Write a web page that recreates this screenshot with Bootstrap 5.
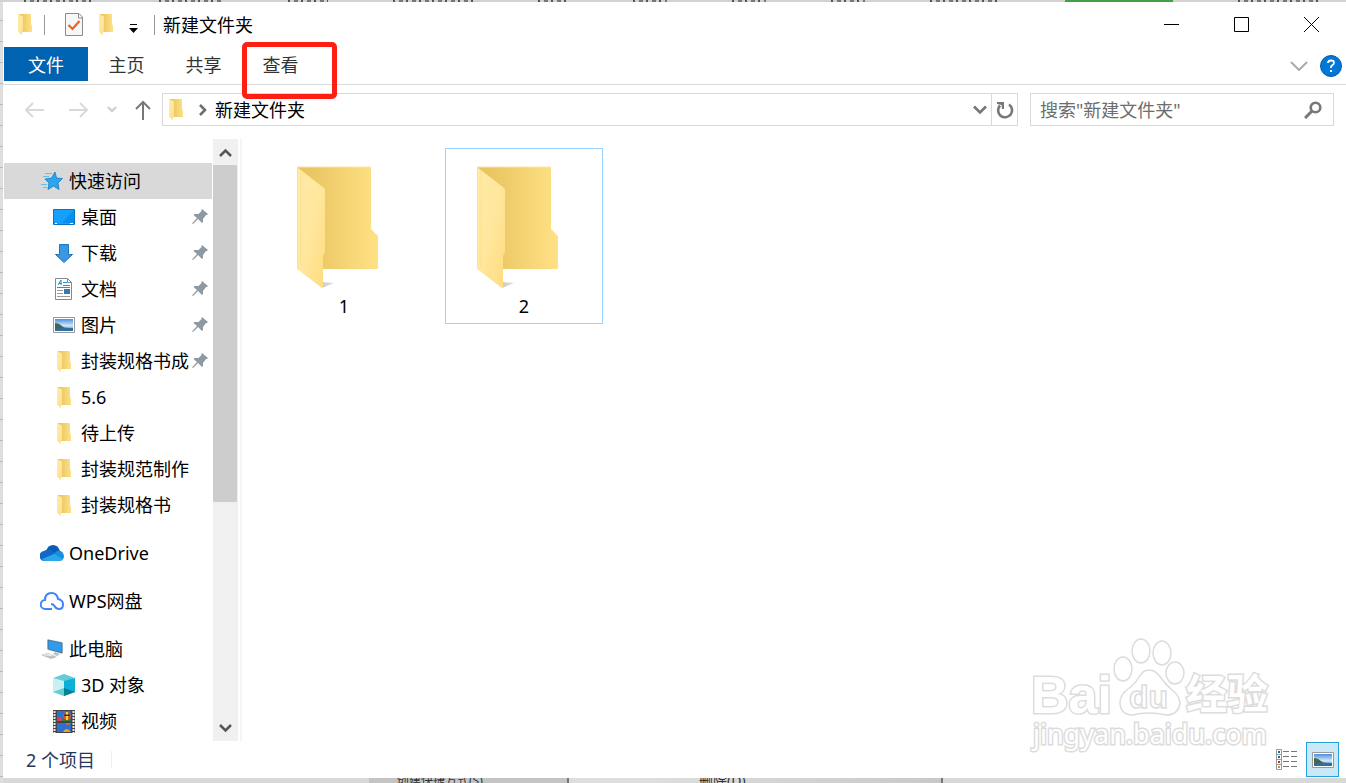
<!DOCTYPE html>
<html lang="zh-CN">
<head>
<meta charset="utf-8">
<meta name="viewport" content="width=device-width, initial-scale=1">
<title>新建文件夹</title>
<link href="https://cdn.jsdelivr.net/npm/bootstrap@5.3.0/dist/css/bootstrap.min.css" rel="stylesheet">
<style>
body{font-family:"Noto Sans","Noto Sans CJK SC",sans-serif;font-size:18px;line-height:24px;color:#000;
  background:repeating-linear-gradient(#dedede 0 20px,#b8b8b8 20px 21px)}
svg{display:block;flex:none}
button{border:0;background:none;padding:0;display:flex;align-items:center;justify-content:center}
a{color:inherit;text-decoration:none}
.desk{padding:2px 0 0 3px}
.behind-top{top:0;height:2px;background:#d2d2d2}
.behind-top span{height:2px;background:repeating-linear-gradient(90deg,#555 0 2px,#d2d2d2 2px 6px,#777 6px 10px,#d2d2d2 10px 13px)}
.behind-top .green{width:108px;background:#43a047}
.behind-bottom{height:5px;background:#d8d8d8;font-size:12px;line-height:12px;color:#333}
.behind-bottom .menu-a{width:200px;margin-left:366px;padding-left:28px;background:#c4c4c4;border-right:2px solid #777}
.behind-bottom .menu-b{width:374px;padding-left:130px;background:linear-gradient(90deg,#dedede 0 80px,#c8c8c8);border-right:2px solid #777;font-size:14px}
.behind-bottom span{line-height:6px}
.titlebar{height:45px;padding-left:15px}
.titlebar .gap-a{margin-left:12px;margin-right:16px}
.rule{width:1px;height:20px;background:#999}
.winbtn{width:70px;height:45px}
.ribbon{height:38px;border-bottom:1px solid #dadbdc;padding-left:1px}
.tab-item{min-width:77px;height:34px;line-height:36px;text-align:center;color:#333}
.tab-file{min-width:84px;background:#0063b1;color:#fff}
.marker{left:0;top:-5px;width:95px;height:57px;border:5px solid #ff1e12;border-radius:5px;z-index:5}
.addressrow{height:54px;padding:8px 12px 0 8px}
.nav-lg{width:45px;height:33px}.nav-sm{width:22px;height:33px}.nav-up{width:39px;height:33px}
.box{height:33px;border:1px solid #d9d9d9;background:#fff}
.crumbs{padding-left:6px}
.refresh{width:26px;height:31px;border-left:1px solid #d9d9d9}
.searchbox{flex:0 0 304px;margin-left:12px;padding:0 11px 0 9px}
.searchbox input{border:0;outline:0;padding:0;min-width:0;color:#6d6d6d;line-height:24px}
.searchbox input::placeholder{color:#6d6d6d;opacity:1}
.sidebar{width:209px;padding:24px 0 0 1px;flex:none}
.sidebar a{display:flex;align-items:center;height:36px;white-space:nowrap}
.sidebar .root{padding-left:36px}
.sidebar .sub{padding-left:48px}
.sidebar .ico{display:flex;justify-content:center;flex:none;width:24px;margin-right:5px}
.sidebar .cap{flex:1;overflow:hidden}
.sidebar .pin{width:16px;margin:0 4px 0 3px}
.sidebar .picked{background:#d9d9d9;width:208px}
.sidebar .spaced{margin-top:12px}
.sbar{width:25px;margin-left:1px;background:#f0f0f0;flex:none}
.sbar button{width:25px;height:26px}
.thumb{height:56%;width:24px;background:#cdcdcd}
.split{width:2px;margin:0 3px 0 2px;background:#f5f5f5;flex:none}
.files{padding:9px 20px;gap:22px}
.tile{width:158px;height:176px;border:1px solid transparent;padding-top:11px;text-align:center}
.tile:focus,.tile.focused{border-color:#99d1ff}
.tile .nm{line-height:36px}
.statusbar{height:37px;padding:0 7px 0 23px;color:#1e395b}
.statusbar .rule{background:#eee;height:17px}
.view-on{width:33px;height:35px;border:1px solid #26a0da;background:#cbe8f6}
.wmark{right:68px;bottom:21px;pointer-events:none}
</style>
</head>
<body>
<svg width="0" height="0" class="position-absolute" aria-hidden="true">
  <defs>
    <linearGradient id="gb" x1="0" x2="1"><stop offset="0" stop-color="#e8c25c"/><stop offset=".3" stop-color="#edca68"/><stop offset="1" stop-color="#ffe184"/></linearGradient>
    <linearGradient id="gf" x1="0" y1="0" x2="1" y2="1"><stop offset="0" stop-color="#ffeaa5"/><stop offset=".5" stop-color="#ffe79e"/><stop offset="1" stop-color="#ffdb7d"/></linearGradient>
    <linearGradient id="gs" x1="0" x2="1"><stop offset="0" stop-color="#ccc"/><stop offset="1" stop-color="#fff" stop-opacity="0"/></linearGradient>
    <linearGradient id="gsky" x1="0" y1="0" x2="0" y2="1"><stop offset="0" stop-color="#4b8ee0"/><stop offset=".55" stop-color="#d2e7f7"/><stop offset="1" stop-color="#4888b8"/></linearGradient>
    <symbol id="folder" viewBox="0 0 128 128">
      <path d="M98 104l12 1-12 4zM42 122l12 1-12 5z" fill="url(#gs)"/>
      <path d="M17 7H90q1 0 1 1V69l7 7v32q0 1-1 1H42L17 90z" fill="url(#gb)"/>
      <path d="M17 7l27 21q1 1 1 2v62l-2 4v32h-1L17 109z" fill="url(#gf)"/>
      <path d="M17.500 8v101M21 12v96" stroke="#ffe08c" fill="none"/>
      <path d="M17 7H91" stroke="#f9e6ac"/>
    </symbol>
    <symbol id="sfolder" viewBox="0 0 14 21"><path d="M1 0h11q1 0 1 1v9l1 2v6H4z" fill="url(#gb)"/><path d="M0 0l4 2q1 0 1 1v14l-1 1v3L0 18z" fill="url(#gf)"/></symbol>
    <symbol id="pin" viewBox="0 0 16 16"><path d="M10 0l6 5-1 1h-1l-3 4v3l-1 1-4-4-5 5-1-.5L5 9 1.500 6l1-1h4l3-3V.8z" fill="#8e9aa3"/></symbol>
    <symbol id="photo" viewBox="0 0 22 16"><path d="M.5.5h21v15H.5z" fill="#fff" stroke="#999"/><path d="M2 2h18v12H2z" fill="url(#gsky)"/><path d="M2 6q4 0 7 3t11 2v1H2z" fill="#3c6950"/><path d="M2 12q8-2 18-1v3H2z" fill="#346c9f"/></symbol>
  </defs>
</svg>

<div class="behind-top position-absolute w-100 d-flex justify-content-between px-4" aria-hidden="true">
  <span style="width:70px"></span><span style="width:64px"></span><span style="width:40px"></span><span style="width:80px"></span><span style="width:30px"></span><span style="width:34px"></span><span style="width:34px"></span><span style="width:34px"></span><span style="width:70px"></span><span class="green"></span><span style="width:84px"></span>
</div>

<div class="desk vh-100 d-flex flex-column overflow-hidden">
<main class="bg-white flex-grow-1 d-flex flex-column position-relative" style="min-height:0">
  <header class="titlebar d-flex align-items-center">
    <svg width="14" height="21"><use href="#sfolder"/></svg>
    <i class="rule gap-a"></i>
    <button class="ms-1" aria-label="属性"><svg width="18" height="23" viewBox="0 0 18 23"><path d="M.5.500H14L17.500 4v18.500H.5z" fill="#f5f7f9" stroke="#8c8c8c"/><path d="M13.500 1v4h4" fill="none" stroke="#8c8c8c"/><path d="M3.500 12l4 4 7-8" stroke="#f1611d" stroke-width="2.200" fill="none"/></svg></button>
    <button class="ms-3" aria-label="新建文件夹"><svg width="14" height="21"><use href="#sfolder"/></svg></button>
    <button class="ms-3" aria-label="自定义快速访问工具栏"><svg width="9" height="16" viewBox="0 0 9 16"><path d="M1 7.500h7" stroke="#000"/><path d="M0 11h9l-4.500 5z"/></svg></button>
    <i class="rule ms-3 me-2"></i>
    <span>新建文件夹</span>
    <div class="ms-auto d-flex">
      <button class="winbtn" aria-label="最小化"><svg width="15" height="15"><path d="M0 7.500h15" stroke="#000"/></svg></button>
      <button class="winbtn" aria-label="最大化"><svg width="15" height="15"><path d="M.5.500h14v14H.5z" fill="none" stroke="#000"/></svg></button>
      <button class="winbtn" aria-label="关闭"><svg width="15" height="15"><path d="M0 0l15 15M15 0L0 15" stroke="#000"/></svg></button>
    </div>
  </header>

  <nav class="ribbon d-flex">
    <a href="#" class="tab-item tab-file">文件</a>
    <a href="#" class="tab-item">主页</a>
    <a href="#" class="tab-item">共享</a>
    <a href="#" class="tab-item position-relative">查看<span class="marker position-absolute"></span></a>
    <div class="ms-auto d-flex align-items-center pe-1">
      <button class="me-2 pe-1" aria-label="展开功能区"><svg width="18" height="10" viewBox="0 0 18 10"><path d="M1 1l8 8 8-8" fill="none" stroke="#aaa" stroke-width="2"/></svg></button>
      <button aria-label="帮助"><svg width="22" height="22" viewBox="0 0 22 22"><circle cx="11" cy="11" r="10.500" fill="#0078d7" stroke="#0a5ba5"/><path d="M8 8q0-2.500 3-2.500t3 2.300q0 1.500-1.700 2.500T11 13" fill="none" stroke="#fff" stroke-width="1.800"/><path d="M10 15h2v2h-2z" fill="#fff"/></svg></button>
    </div>
  </nav>

  <div class="addressrow d-flex">
    <button class="nav-lg" aria-label="返回"><svg width="20" height="16" viewBox="0 0 20 16"><path d="M20 8H2M9 1L2 8l7 7" fill="none" stroke="#d9d9d9" stroke-width="2"/></svg></button>
    <button class="nav-lg" aria-label="前进"><svg width="20" height="16" viewBox="0 0 20 16"><path d="M0 8h18M11 1l7 7-7 7" fill="none" stroke="#d9d9d9" stroke-width="2"/></svg></button>
    <button class="nav-sm" aria-label="最近浏览的位置"><svg width="10" height="7" viewBox="0 0 10 7"><path d="M1 1l4 4 4-4" fill="none" stroke="#d0d0d0" stroke-width="2.400"/></svg></button>
    <button class="nav-up" aria-label="向上"><svg width="16" height="20" viewBox="0 0 16 20"><path d="M8 20V2M1 9l7-7 7 7" fill="none" stroke="#777" stroke-width="2"/></svg></button>
    <div class="box crumbs d-flex flex-grow-1 align-items-center">
      <svg width="14" height="21" class="me-3"><use href="#sfolder"/></svg>
      <svg width="8" height="12" viewBox="0 0 8 12"><path d="M1 1l5 5-5 5" fill="none" stroke="#6d6d6d" stroke-width="2.600"/></svg>
      <a href="#" class="ms-2 ps-0">新建文件夹</a>
      <button class="ms-auto me-1" aria-label="以前的位置"><svg width="14" height="10" viewBox="0 0 14 10"><path d="M1 1.500l6 6 6-6" fill="none" stroke="#777" stroke-width="2.600"/></svg></button>
      <button class="refresh" aria-label="刷新"><svg width="18" height="18" viewBox="0 0 18 18"><path d="M4 4.500A7 7 0 1 0 13 3.500" fill="none" stroke="#777" stroke-width="2.600"/><path d="M1 1h7v7H6L5.500 4 1 3z" fill="#777"/></svg></button>
    </div>
    <div class="box searchbox d-flex align-items-center">
      <input class="flex-grow-1" type="text" aria-label="搜索" placeholder="搜索&quot;新建文件夹&quot;">
      <button aria-label="开始搜索"><svg width="18" height="18" viewBox="0 0 18 18"><circle cx="11.500" cy="6.500" r="4.800" fill="none" stroke="#777" stroke-width="2.600"/><path d="M8 10l-7 7" stroke="#777" stroke-width="3"/></svg></button>
    </div>
  </div>

  <div class="d-flex flex-grow-1" style="min-height:0">
    <nav class="sidebar overflow-hidden">
      <a href="#" class="root picked"><span class="ico"><svg width="22" height="18" viewBox="0 0 22 18"><path d="M14 0l1.500 6 6 .5-4.500 4.500 1 6.500-5.500-3.500L7 17.500l1-6.500-4-4 6.500-1z" fill="#2aa5ee" stroke="#1979bd" stroke-width=".8"/><path d="M4 1.500h7M2 4.500h6M0 12.500h6M2 15.500h4" stroke="#62bdf0"/></svg></span><span class="cap">快速访问</span></a>
      <a href="#" class="sub"><span class="ico"><svg width="22" height="16" viewBox="0 0 22 16"><path d="M.5.500h21v15H.5z" fill="#15a0fb" stroke="#0b73bd"/><path d="M21 1v13H9z" fill="#078eef"/><path d="M2 14.500h2M17 14.500h3" stroke="#fff"/></svg></span><span class="cap">桌面</span><svg class="pin" height="16"><use href="#pin"/></svg></a>
      <a href="#" class="sub"><span class="ico"><svg width="18" height="19" viewBox="0 0 18 19"><path d="M4.500.500h9v10h4L9 18.500.5 10.500h4z" fill="#3b97e4" stroke="#1f74bd"/></svg></span><span class="cap">下载</span><svg class="pin" height="16"><use href="#pin"/></svg></a>
      <a href="#" class="sub"><span class="ico"><svg width="18" height="22" viewBox="0 0 18 22"><path d="M.5.500h12l4 4v17H.5z" fill="#fff" stroke="#888"/><path d="M12.500.500v4h4" fill="none" stroke="#888"/><path d="M3 7l3-5v5M4 5.500h3M8 4.500h4M8 7.500h7M2 9.500h13" stroke="#1998db" fill="none"/><path d="M2 12.500h6M2 15.500h6M2 18.500h13" stroke="#999"/><path d="M9 11h6v5H9z" fill="#3b78a9"/></svg></span><span class="cap">文档</span><svg class="pin" height="16"><use href="#pin"/></svg></a>
      <a href="#" class="sub"><span class="ico"><svg width="22" height="16"><use href="#photo"/></svg></span><span class="cap">图片</span><svg class="pin" height="16"><use href="#pin"/></svg></a>
      <a href="#" class="sub"><span class="ico"><svg width="14" height="21"><use href="#sfolder"/></svg></span><span class="cap">封装规格书成</span><svg class="pin" height="16"><use href="#pin"/></svg></a>
      <a href="#" class="sub"><span class="ico"><svg width="14" height="21"><use href="#sfolder"/></svg></span><span class="cap">5.6</span></a>
      <a href="#" class="sub"><span class="ico"><svg width="14" height="21"><use href="#sfolder"/></svg></span><span class="cap">待上传</span></a>
      <a href="#" class="sub"><span class="ico"><svg width="14" height="21"><use href="#sfolder"/></svg></span><span class="cap">封装规范制作</span></a>
      <a href="#" class="sub"><span class="ico"><svg width="14" height="21"><use href="#sfolder"/></svg></span><span class="cap">封装规格书</span></a>
      <a href="#" class="root spaced"><span class="ico"><svg width="24" height="16" viewBox="0 0 24 16"><path d="M6 6Q8 0 13 0t7 6l-7 5z" fill="#0a5cb8"/><path d="M5 16a5 5 0 0 1-1-10q4-3 8 0l6 5-10 5z" fill="#1068c8"/><path d="M12 10l5-4q6-1 7 5 0 4-4 5z" fill="#1490df"/><path d="M2 14l12-5 9 5q-1 2-4 2H5q-2 0-3-2z" fill="#28a8ea"/></svg></span><span class="cap">OneDrive</span></a>
      <a href="#" class="root spaced"><span class="ico"><svg width="24" height="18" viewBox="0 0 24 18"><path d="M12 17H5.500a4.500 4.500 0 0 1-.5-9Q5 1 11.500 1 17 1 18 7q5 1 5 5.500 0 4.500-4 4.500-3 0-4.500-3-1-2-3.500-2 2 0 3.500 2" fill="none" stroke="#4285f4" stroke-width="2"/></svg></span><span class="cap">WPS网盘</span></a>
      <a href="#" class="root spaced"><span class="ico"><svg width="22" height="20" viewBox="0 0 22 20"><path d="M6 0l16 3v12L6 11z" fill="#d3dbe0"/><path d="M7 1l14 3v10L7 10z" fill="#2e9df0" stroke="#416a87" stroke-width=".8"/><path d="M14 13l5 2-3 2-4-2zM0 16l7-2 9 4-6 2z" fill="#b8c1c7"/><path d="M3 16h7M6 15l5 2" stroke="#f4f6f7"/></svg></span><span class="cap">此电脑</span></a>
      <a href="#" class="sub"><span class="ico"><svg width="22" height="22" viewBox="0 0 22 22"><path d="M0 4l11-4 11 4-11 4z" fill="#65cbd7"/><path d="M0 4l11 3v15L0 18z" fill="#c9f0f1"/><path d="M22 4L11 7v15l11-4z" fill="#0bafd8"/><path d="M0 18l11-4v8z" fill="#64cad3"/><path d="M22 18l-11-4v8z" fill="#078096"/></svg></span><span class="cap">3D 对象</span></a>
      <a href="#" class="sub"><span class="ico"><svg width="22" height="23" viewBox="0 0 22 23"><path d="M0 0h22v23H0z" fill="#444"/><path d="M4 1h14v10H4zM4 13h14v9H4z" fill="#2f6fd0"/><path d="M1.500 1v22M20.500 1v22" stroke="#eee" stroke-width="2" stroke-dasharray="2 1"/><path d="M4 8l4-1 3 4H4z" fill="#dc414a"/><path d="M9 9l9-1v3H9z" fill="#3b7a3d"/><circle cx="14" cy="6" r="3.800" fill="#dc5827"/><path d="M13 2h2v8h-2z" fill="#f3d240"/><path d="M11 4.500h6v1.500h-6z" fill="#333"/><path d="M12 13h6l-2 2h-2z" fill="#d7642c"/><path d="M10 22q3-6 8 0z" fill="#e2a632"/></svg></span><span class="cap">视频</span></a>
    </nav>
    <div class="sbar d-flex flex-column">
      <button aria-label="向上滚动"><svg width="13" height="9" viewBox="0 0 13 9"><path d="M1 8l5.500-5.500L12 8" fill="none" stroke="#555" stroke-width="2.500"/></svg></button>
      <div class="thumb"></div>
      <button class="mt-auto" aria-label="向下滚动"><svg width="13" height="9" viewBox="0 0 13 9"><path d="M1 1l5.500 5.500L12 1" fill="none" stroke="#555" stroke-width="2.500"/></svg></button>
    </div>
    <div class="split"></div>
    <section class="files d-flex flex-wrap align-content-start flex-grow-1">
      <a href="#" class="tile"><svg width="128" height="128" class="mx-auto"><use href="#folder"/></svg><div class="nm">1</div></a>
      <a href="#" class="tile focused"><svg width="128" height="128" class="mx-auto"><use href="#folder"/></svg><div class="nm">2</div></a>
    </section>
  </div>

  <footer class="statusbar d-flex align-items-center">
    <span>2 个项目</span><i class="rule ms-3"></i>
    <button class="ms-auto me-2" aria-label="详细信息"><svg width="22" height="21" viewBox="0 0 22 21"><path d="M.5.500h5v20h-5zM0 5.500h5M0 10.500h5M0 15.500h5" fill="#fff" stroke="#999"/><path d="M7 2.500h6m2 0h6M7 7.500h6m2 0h6M7 12.500h6m2 0h6M7 17.500h6m2 0h6" stroke="#777"/><path d="M2 2h2v2H2zM2 7h2v2H2z" fill="#268"/><path d="M2 12h2v2H2z" fill="#c31"/><path d="M2 17h2v2H2z" fill="#a95"/></svg></button>
    <button class="view-on" aria-label="大图标"><svg width="22" height="16"><use href="#photo"/></svg></button>
  </footer>

  <svg class="wmark position-absolute" width="250" height="124" viewBox="0 0 250 124" fill="#fff" stroke="#dcdcdc" stroke-width="1.500" font-family="'Liberation Sans','Noto Sans CJK SC',sans-serif">
    <g font-weight="700" stroke-width="3" paint-order="stroke"><text x="3" y="80" font-size="52">Bai</text><text x="158" y="76" font-size="41">经验</text></g>
    <ellipse cx="95" cy="36" rx="9" ry="12"/><ellipse cx="113" cy="18" rx="9" ry="12"/><ellipse cx="134" cy="20" rx="9" ry="12"/><ellipse cx="147" cy="40" rx="9" ry="11"/>
    <path d="M121 37q7 0 12 8 4 6 11 12 8 6 8 14-2 11-14 11-8-2-17-2t-16 2q-13 0-13-13 0-7 8-13 7-5 11-12 4-7 10-7z"/>
    <text x="101" y="75" font-size="32" font-weight="700">du</text>
    <text x="5" y="111" font-size="27" font-family="'Noto Sans',sans-serif" stroke-width="3" paint-order="stroke">jingyan.baidu.com</text>
  </svg>
</main>
<div class="behind-bottom d-flex overflow-hidden flex-shrink-0" aria-hidden="true"><span class="menu-a">创建快捷方式(S)</span><span class="menu-b">删除(D)</span></div>
</div>
<script src="https://cdn.jsdelivr.net/npm/bootstrap@5.3.0/dist/js/bootstrap.bundle.min.js"></script>
</body>
</html>
